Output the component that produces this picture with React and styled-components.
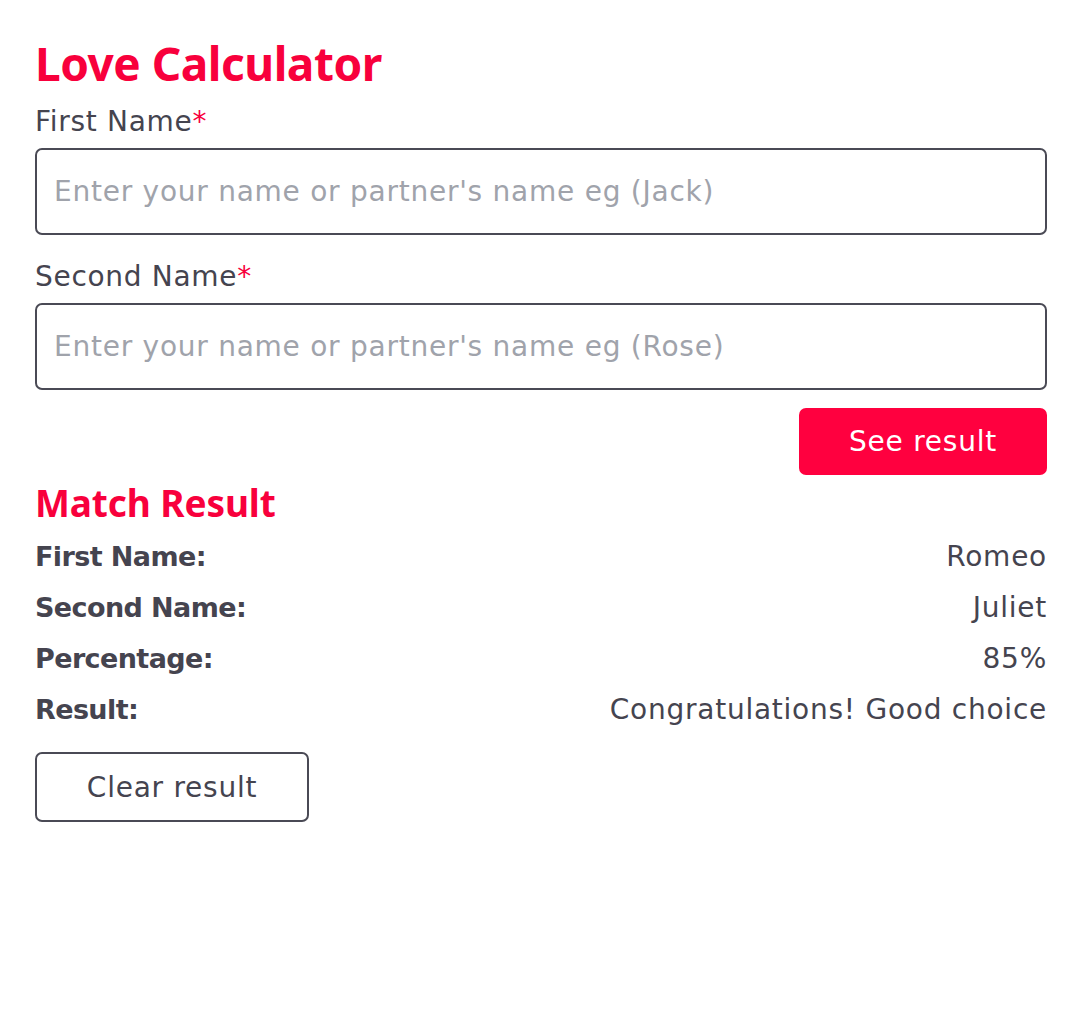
import React from 'react';
import styled, { createGlobalStyle } from 'styled-components';

const GlobalStyle = createGlobalStyle`
  body {
    margin: 0;
    background: #ffffff;
    font-family: "DejaVu Sans", "Noto Sans", sans-serif;
    color: #45444f;
  }
`;

const Page = styled.div`
  padding: 33px 33px 40px 35px;
`;

const Title = styled.h1`
  margin: 0 0 9px;
  font-family: "Noto Sans", sans-serif;
  font-size: 46px;
  line-height: 60px;
  font-weight: 700;
  color: #f8003c;
  letter-spacing: -0.5px;
`;

const Field = styled.div`
  display: flex;
  flex-direction: column;
  margin-bottom: ${(p) => p.$gap || 0}px;
`;

const Label = styled.label`
  font-size: 28px;
  line-height: 40px;
  letter-spacing: 0.7px;
  margin-bottom: 6px;
  color: #45444f;
`;

const Star = styled.span`
  color: #f8003c;
`;

const Input = styled.input`
  box-sizing: border-box;
  height: 87px;
  width: 100%;
  border: 2px solid #4a4a55;
  border-radius: 7px;
  padding: 0 17px;
  font-family: inherit;
  font-size: 28px;
  letter-spacing: 0.75px;
  color: #45444f;
  outline: none;

  &::placeholder {
    color: #a0a3ab;
  }
`;

const Actions = styled.div`
  display: flex;
  justify-content: flex-end;
  margin-top: 18px;
`;

const PrimaryButton = styled.button`
  width: 248px;
  height: 67px;
  border: none;
  border-radius: 7px;
  background: #ff003f;
  color: #ffffff;
  font-family: inherit;
  font-size: 28px;
  letter-spacing: 0.75px;
  cursor: pointer;
`;

const ResultTitle = styled.h2`
  margin: 6px 0 6px;
  font-family: "Noto Sans", sans-serif;
  font-size: 37px;
  line-height: 44px;
  font-weight: 700;
  color: #f8003c;
  letter-spacing: -0.1px;
`;

const Row = styled.div`
  display: flex;
  justify-content: space-between;
  align-items: center;
  height: 51px;
  font-size: 28px;
`;

const Key = styled.span`
  font-size: 27px;
  font-weight: 700;
  letter-spacing: -0.6px;
`;

const Value = styled.span`
  font-weight: 400;
  letter-spacing: 0.75px;
`;

const OutlineButton = styled.button`
  margin-top: 17px;
  width: 274px;
  height: 70px;
  background: #ffffff;
  border: 2px solid #4a4a55;
  border-radius: 7px;
  color: #45444f;
  font-family: inherit;
  font-size: 28px;
  letter-spacing: 0.75px;
  cursor: pointer;
`;

const results = [
  ['First Name:', 'Romeo'],
  ['Second Name:', 'Juliet'],
  ['Percentage:', '85%'],
  ['Result:', 'Congratulations! Good choice'],
];

const App = () => {
  return (
    <Page>
      <GlobalStyle />
      <Title>Love Calculator</Title>

      <Field $gap={22}>
        <Label>
          First Name<Star>*</Star>
        </Label>
        <Input placeholder="Enter your name or partner's name eg (Jack)" />
      </Field>

      <Field>
        <Label>
          Second Name<Star>*</Star>
        </Label>
        <Input placeholder="Enter your name or partner's name eg (Rose)" />
      </Field>

      <Actions>
        <PrimaryButton>See result</PrimaryButton>
      </Actions>

      <ResultTitle>Match Result</ResultTitle>
      {results.map(([k, v]) => (
        <Row key={k}>
          <Key>{k}</Key>
          <Value>{v}</Value>
        </Row>
      ))}

      <OutlineButton>Clear result</OutlineButton>
    </Page>
  );
};

export default App;
